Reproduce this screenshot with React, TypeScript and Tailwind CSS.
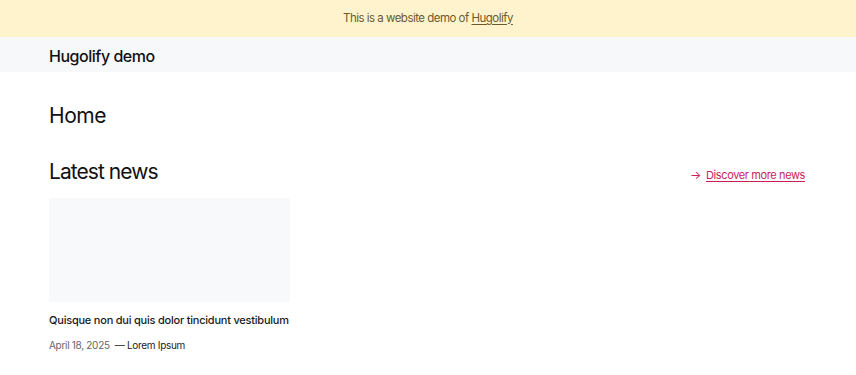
export default function App(): React.JSX.Element {
  return (
    <div className="min-h-screen bg-white text-[#111] font-['Inter','Liberation_Sans',sans-serif]">
      <div className="flex h-[37px] items-center justify-center bg-[#fef3cd] text-[11.5px] tracking-[-0.045em] text-[#6b5a2e]">
        <p>
          This is a website demo of{' '}
          <a href="#" className="underline underline-offset-2">Hugolify</a>
        </p>
      </div>

      <header className="flex h-[35px] items-center bg-[#f6f8f9] px-[49px] pt-[2px]">
        <span className="text-[16px] font-medium tracking-[-0.03em]">Hugolify demo</span>
      </header>

      <main className="pl-[49px] pr-[51px]">
        <h1 className="mt-[30px] text-[21px] leading-[28px] tracking-[-0.02em]">Home</h1>

        <section className="mt-[28px]">
          <div className="flex items-baseline justify-between">
            <h2 className="text-[21px] leading-[28px] tracking-[-0.045em]">Latest news</h2>
            <a href="#" className="flex items-baseline gap-[5px] text-[11px] tracking-[-0.035em] text-[#c81e5a]">
              <span className="text-[12px]">→</span>
              <span className="underline underline-offset-2">Discover more news</span>
            </a>
          </div>

          <div className="mt-[12px] grid grid-cols-3 gap-4">
            <article>
              <div className="h-[104px] bg-[#f8f9fa]" />
              <h3 className="mt-[10px] whitespace-nowrap text-[11px] font-medium leading-[16px] tracking-[-0.02em] text-[#1a1a1a]">
                Quisque non dui quis dolor tincidunt vestibulum
              </h3>
              <p className="mt-[10px] text-[10px] leading-[14px] tracking-[-0.03em]">
                <span className="text-[#666]">April 18, 2025</span>
                <span className="ml-[5px] text-[#222]">— Lorem Ipsum</span>
              </p>
            </article>
          </div>
        </section>
      </main>
    </div>
  );
}
